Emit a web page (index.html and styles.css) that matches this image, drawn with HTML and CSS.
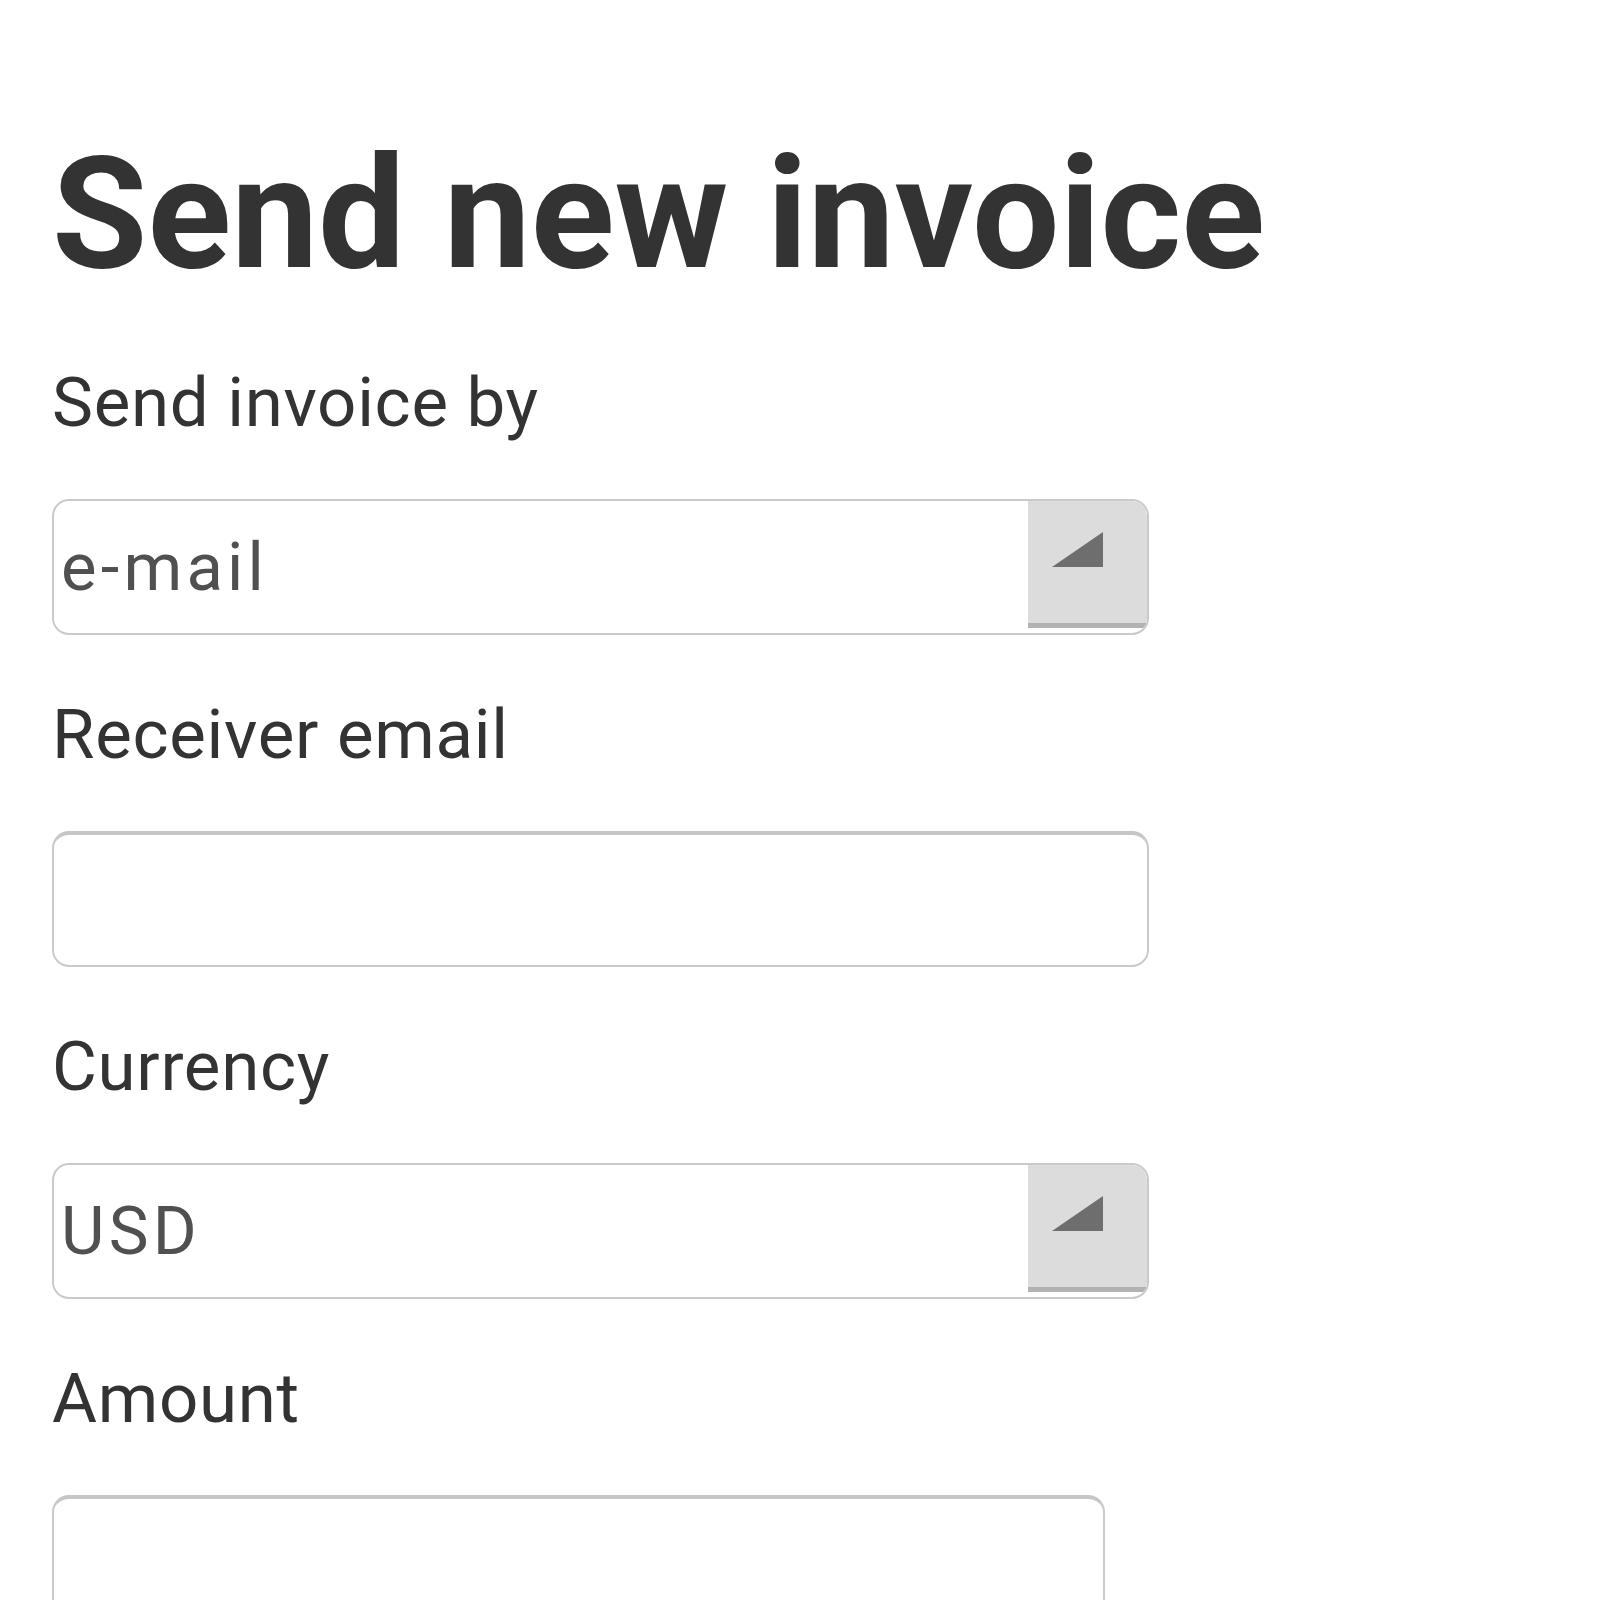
FILE: index.html
```html
<!DOCTYPE html>
<html lang="en">
<head>
  <meta charset="utf-8" />
  <title>Send new invoice</title>
  <link rel="stylesheet" href="styles.css">
</head>
<body>
  <form class="invoice-form">
    <h1 class="form-title">Send new invoice</h1>

    <div class="field">
      <label class="field-label" for="send-by">Send invoice by</label>
      <div class="select-box">
        <select id="send-by" class="select-input">
          <option>e-mail</option>
          <option>sms</option>
        </select>
        <span class="select-button">
          <svg width="51" height="35" viewBox="0 0 51 35"><polygon points="0,35 51,0 51,35" fill="#6e6e6e" /></svg>
        </span>
      </div>
    </div>

    <div class="field">
      <label class="field-label" for="receiver">Receiver email</label>
      <input id="receiver" class="text-input" type="email" />
    </div>

    <div class="field">
      <label class="field-label" for="currency">Currency</label>
      <div class="select-box">
        <select id="currency" class="select-input">
          <option>USD</option>
          <option>EUR</option>
        </select>
        <span class="select-button">
          <svg width="51" height="35" viewBox="0 0 51 35"><polygon points="0,35 51,0 51,35" fill="#6e6e6e" /></svg>
        </span>
      </div>
    </div>

    <div class="field">
      <label class="field-label" for="amount">Amount</label>
      <input id="amount" class="text-input text-input-short" type="text" />
    </div>
  </form>
</body>
</html>
```

FILE: styles.css
```css
*, *::before, *::after {
  box-sizing: border-box;
}

body {
  margin: 0;
  background: white;
  font-family: Roboto, "Noto Sans", sans-serif;
  color: #333;
  overflow: hidden;
}

.invoice-form {
  padding: 0 0 0 52px;
}

.form-title {
  margin: 124px 0 0;
  font-size: 155px;
  font-weight: 700;
  line-height: 180px;
  color: #333;
}

.field {
  margin-top: 59px;
}

.field + .field {
  margin-top: 60px;
}

.field-label {
  display: block;
  font-size: 69px;
  line-height: 80px;
  letter-spacing: 0.7px;
  margin-bottom: 56px;
  color: #333;
}

.select-box {
  display: flex;
  width: 1097px;
  height: 136px;
  border: 2px solid #cacaca;
  border-radius: 17px;
  background: white;
  overflow: hidden;
}

.select-input {
  flex: 1;
  appearance: none;
  -webkit-appearance: none;
  border: none;
  outline: none;
  background: transparent;
  margin: 0;
  padding: 0 0 0 7px;
  font-family: inherit;
  font-size: 67px;
  letter-spacing: 4.2px;
  color: #505050;
}

.select-button {
  display: flex;
  align-items: flex-start;
  width: 119px;
  padding: 31px 0 0 24px;
  margin-bottom: 5px;
  background: #dcdcdc;
  border-bottom: 5px solid #b2b2b2;
  border-radius: 0 15px 0 0;
}

.text-input {
  display: block;
  width: 1097px;
  height: 136px;
  margin: 0;
  border: 2px solid #cacaca;
  border-top: 4px solid #c6c6c6;
  border-radius: 17px;
  background: white;
  font-family: inherit;
  font-size: 66px;
  color: #505050;
  outline: none;
}

.text-input-short {
  width: 1053px;
}
```
